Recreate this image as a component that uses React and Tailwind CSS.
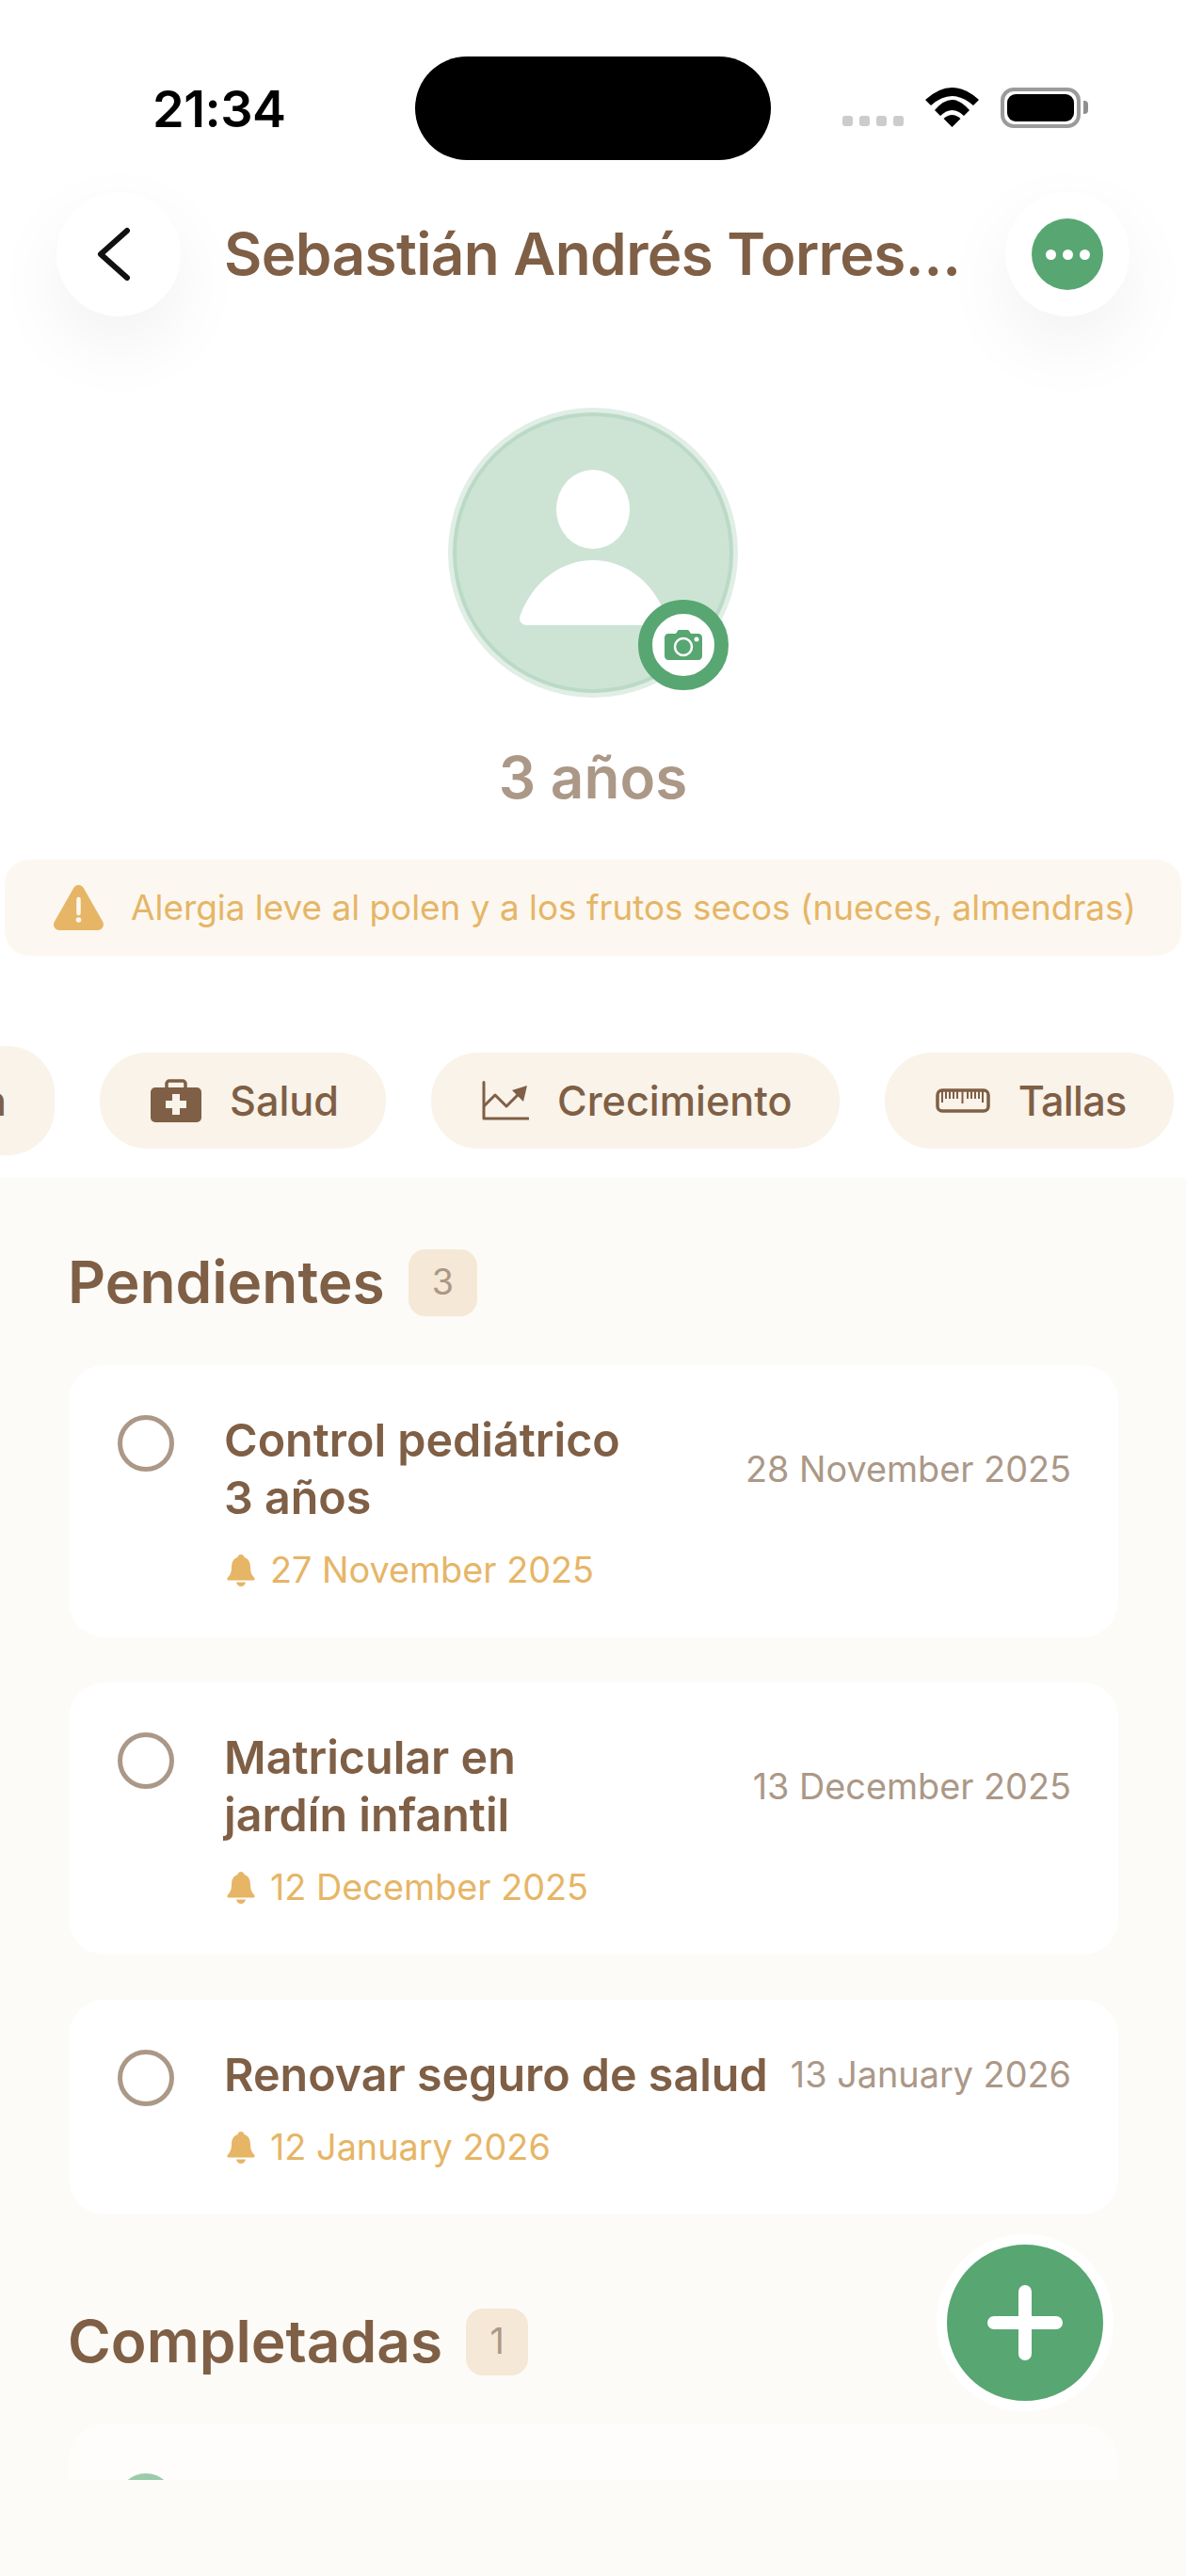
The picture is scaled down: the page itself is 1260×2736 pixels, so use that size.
const BRIEFCASE = (
  <svg width="54" height="46" viewBox="0 0 54 46" className="shrink-0">
    <path d="M17 10V5a3 3 0 0 1 3-3h14a3 3 0 0 1 3 3v5" fill="none" stroke="#7f5f45" strokeWidth="3.5" />
    <rect x="0" y="9" width="54" height="37" rx="5" fill="#7f5f45" />
    <path d="M23 16h8v7h7v8h-7v7h-8v-7h-7v-8h7z" fill="#f9f3ea" strokeLinejoin="round" />
  </svg>
);

const CHART = (
  <svg width="50" height="42" viewBox="0 0 50 42" className="shrink-0">
    <path d="M2 1.5V40H49" fill="none" stroke="#7f5f45" strokeWidth="3" strokeLinecap="round" strokeLinejoin="round" />
    <path d="M2 27L14 15L26 27L39 14" fill="none" stroke="#7f5f45" strokeWidth="3" strokeLinejoin="round" />
    <path d="M32 10L48 5L44 22Z" fill="#7f5f45" />
  </svg>
);

const RULER_TICKS = [7, 11, 15, 19, 23, 28.5, 34, 38, 42, 46, 50];

const RULER = (
  <svg width="58" height="26" viewBox="0 0 58 26" className="shrink-0">
    <rect x="2" y="2" width="54" height="22" rx="5" fill="none" stroke="#7f5f45" strokeWidth="3.5" />
    {RULER_TICKS.map((x, i) => (
      <line key={x} x1={x} y1="3" x2={x} y2={i === 5 ? 16 : i === 0 || i === 10 ? 15 : 11} stroke="#7f5f45" strokeWidth="2" />
    ))}
  </svg>
);

const Bell = () => (
  <svg width="30" height="34" viewBox="0 0 30 34" className="shrink-0 ml-[3px]">
    <path d="M15 0c2 0 3 1.300 3.500 3C23.500 4.500 25 9 25 14c0 5 1.500 8 4 10.500 1.300 1.300.5 3-1 3H2c-1.500 0-2.300-1.700-1-3C3.500 22 5 19 5 14c0-5 1.500-9.500 6.500-11C12 1.300 13 0 15 0z" fill="#e6b566" />
    <path d="M10 29.500h10c-.5 2.500-2.500 4.500-5 4.500s-4.500-2-5-4.500z" fill="#e6b566" />
  </svg>
);

const tasks = [
  { id: 1, title: ['Control pediátrico', '3 años'], date: '28 November 2025', remind: '27 November 2025' },
  { id: 2, title: ['Matricular en', 'jardín infantil'], date: '13 December 2025', remind: '12 December 2025' },
  { id: 3, title: ['Renovar seguro de salud'], date: '13 January 2026', remind: '12 January 2026' },
];

const TaskCard = ({ task }) => (
  <div className="bg-white rounded-[38px] pl-[52px] pr-[50px] pt-[49px] pb-[47px] flex">
    <div className="mt-[4px] w-[60px] h-[60px] rounded-full border-[5px] border-[#ab9887] shrink-0" />
    <div className="ml-[53px] flex-1">
      <div className="flex items-center justify-between">
        <div className="text-[48.4px] leading-[61px] font-semibold text-[#7f5f45] whitespace-nowrap">
          {task.title.map((line) => (
            <div key={line}>{line}</div>
          ))}
        </div>
        <span className="text-[37.8px] text-[#ab9887] whitespace-nowrap">{task.date}</span>
      </div>
      <div className="mt-[22px] h-[49px] flex items-center gap-[16px] text-[37.8px] text-[#e6b566]">
        <Bell />
        <span>{task.remind}</span>
      </div>
    </div>
  </div>
);

const SectionTitle = ({ title, count }) => (
  <div className="flex items-center gap-[25px] h-[71px] -ml-[1px]">
    <h2 className="text-[62.2px] font-semibold text-[#7f5f45] leading-none">{title}</h2>
    <span className="h-[71px] min-w-[66px] px-[25px] rounded-[18px] bg-[#f5e8d6] flex items-center justify-center text-[37.6px] text-[#ab9887]">
      {count}
    </span>
  </div>
);

const Tab = ({ icon, label, labelClass }) => (
  <div className="h-[102px] rounded-[50px] bg-[#f9f3ea] pl-[54px] pr-[50px] flex items-center gap-[30px] shrink-0 text-[43.2px] font-medium text-[#7f5f45]">
    {icon}
    <span className={labelClass}>{label}</span>
  </div>
);

export default function App() {
  return (
    <div className="w-[1260px] h-[2736px] relative overflow-hidden bg-white flex flex-col font-['Inter',sans-serif]">
      {/* Status bar */}
      <div className="h-[170px] pt-[60px] flex shrink-0">
        <div className="w-[441px] pl-[162px] pt-[25px] text-[54px] leading-[62px] font-semibold text-black tracking-[-0.5px]">21:34</div>
        <div className="w-[378px] h-[110px] rounded-[55px] bg-black" />
        <div className="flex-1 pt-[33px] pl-[76px] flex items-start">
          <div className="flex gap-[7px] mt-[30px]">
            {[0, 1, 2, 3].map((d) => (
              <div key={d} className="w-[11px] h-[11px] rounded-[3px] bg-[#cccccc]" />
            ))}
          </div>
          <svg width="57" height="42" viewBox="0 0 57 42" className="ml-[23px]">
            <path d="M0 13Q28.500 -13 57 13L51 19Q28.500 -1 6 19Z" />
            <path d="M10 24Q28.500 2 47 24L41 30Q28.500 18 16 30Z" />
            <path d="M19.500 33Q28.500 25 37.500 33L28.500 42Z" />
          </svg>
          <div className="ml-[23px] w-[85px] h-[43px] rounded-[14px] border-[4px] border-[#9b9b9b] p-[3px]">
            <div className="w-full h-full rounded-[9px] bg-black" />
          </div>
          <div className="w-[5px] h-[14px] mt-[14px] ml-[3px] rounded-r-[4px] bg-[#8f8f8f]" />
        </div>
      </div>

      {/* Header */}
      <div className="mt-[34px] px-[60px] flex items-center justify-between shrink-0">
        <div className="flex items-center">
          <div className="w-[132px] h-[132px] rounded-full bg-white shadow-[0_30px_80px_rgba(0,0,0,0.06)] flex items-center justify-center">
            <svg width="40" height="60" viewBox="0 0 40 60" className="mr-[12px]">
              <path d="M35 5L7 30L35 55" fill="none" stroke="#111111" strokeWidth="6" strokeLinecap="round" strokeLinejoin="round" />
            </svg>
          </div>
          <h1 className="ml-[46px] text-[62px] tracking-[-0.6px] leading-none font-semibold text-[#7f5f45] whitespace-nowrap">Sebastián Andrés Torres…</h1>
        </div>
        <div className="w-[132px] h-[132px] rounded-full bg-white shadow-[0_30px_80px_rgba(0,0,0,0.06)] flex items-center justify-center">
          <div className="w-[76px] h-[76px] rounded-full bg-[#58a672] flex items-center justify-center gap-[7px]">
            <div className="w-[11px] h-[11px] rounded-full bg-white" />
            <div className="w-[11px] h-[11px] rounded-full bg-white" />
            <div className="w-[11px] h-[11px] rounded-full bg-white" />
          </div>
        </div>
      </div>

      {/* Avatar */}
      <div className="mt-[97px] self-center relative w-[308px] h-[308px] rounded-full bg-[#e0eee6] p-[5px] shrink-0">
        <div className="w-full h-full rounded-full bg-[#cde4d5] border-[4px] border-[#bbdac6]" />
        <svg width="308" height="308" viewBox="0 0 308 308" className="absolute left-0 top-0">
          <ellipse cx="154" cy="108" rx="39" ry="42" fill="#ffffff" />
          <path d="M84 231H224C230 231 234 226 231 220C218 185 188 162 154 162C120 162 90 185 77 220C74 226 78 231 84 231Z" fill="#ffffff" />
        </svg>
        <div className="absolute left-[202px] top-[204px] w-[96px] h-[96px] rounded-full bg-white border-[15px] border-[#58a672] flex items-center justify-center">
          <svg width="40" height="32" viewBox="0 0 40 32">
            <path d="M4 4h8l2-3c.5-.7 1-1 2-1h8c1 0 1.500.3 2 1l2 3h8c2.200 0 4 1.800 4 4v20c0 2.200-1.800 4-4 4H4c-2.200 0-4-1.800-4-4V8c0-2.200 1.800-4 4-4z" fill="#58a672" />
            <circle cx="20" cy="18" r="9" fill="none" stroke="#ffffff" strokeWidth="2.500" />
            <circle cx="34" cy="10" r="2.500" fill="#ffffff" />
          </svg>
        </div>
      </div>

      <p className="mt-[49px] text-center text-[62px] leading-[72px] font-semibold text-[#ab9887] shrink-0">3 años</p>

      {/* Allergy notice */}
      <div className="mt-[51px] mx-[5px] h-[102px] rounded-[26px] bg-[#fcf8f1] pl-[52px] flex items-center gap-[29px] shrink-0">
        <svg width="53" height="48" viewBox="0 0 53 48" className="shrink-0">
          <path d="M26.500 6L6 42H47Z" fill="#e6b566" stroke="#e6b566" strokeWidth="12" strokeLinejoin="round" />
          <line x1="26.500" y1="15" x2="26.500" y2="30" stroke="#fcf8f1" strokeWidth="4.500" strokeLinecap="round" />
          <circle cx="26.500" cy="37" r="2.800" fill="#fcf8f1" />
        </svg>
        <span className="text-[36.9px] text-[#e6b566] whitespace-nowrap">Alergia leve al polen y a los frutos secos (nueces, almendras)</span>
      </div>

      {/* Tabs */}
      <div className="mt-[96px] h-[116px] flex items-center gap-[48px] overflow-hidden shrink-0">
        <div className="-ml-[300px] w-[358px] h-[116px] rounded-[50px] bg-[#f9f3ea] pr-[51px] flex items-center justify-end shrink-0 text-[43.2px] font-medium text-[#7f5f45] whitespace-nowrap">
          Información
        </div>
        <Tab icon={BRIEFCASE} label="Salud" />
        <Tab icon={CHART} label="Crecimiento" />
        <Tab icon={RULER} label="Tallas" labelClass="tracking-[-0.7px]" />
      </div>

      {/* Tasks */}
      <div className="mt-[24px] flex-1 bg-[#fcfbf7] pl-[73px] pr-[72px]">
        <div className="h-[1383px] pt-[76px] overflow-hidden">
          <SectionTitle title="Pendientes" count="3" />
          <div className="mt-[52px] flex flex-col gap-[48px]">
            {tasks.map((task) => (
              <TaskCard key={task.id} task={task} />
            ))}
          </div>
          <div className="mt-[100px]">
            <SectionTitle title="Completadas" count="1" />
          </div>
          <div className="mt-[52px] bg-[#fefdfb] rounded-[38px] pl-[52px] py-[52px] h-[200px]">
            <div className="w-[60px] h-[60px] rounded-full bg-[#9ccbaa]" />
          </div>
        </div>
      </div>

      {/* Add button */}
      <div className="absolute left-[995px] top-[2373px] w-[188px] h-[188px] rounded-full bg-[#58a672] border-[11px] border-white flex items-center justify-center">
        <svg width="80" height="80" viewBox="0 0 80 80">
          <path d="M40 7V73M7 40H73" fill="none" stroke="#ffffff" strokeWidth="14" strokeLinecap="round" />
        </svg>
      </div>
    </div>
  );
}
